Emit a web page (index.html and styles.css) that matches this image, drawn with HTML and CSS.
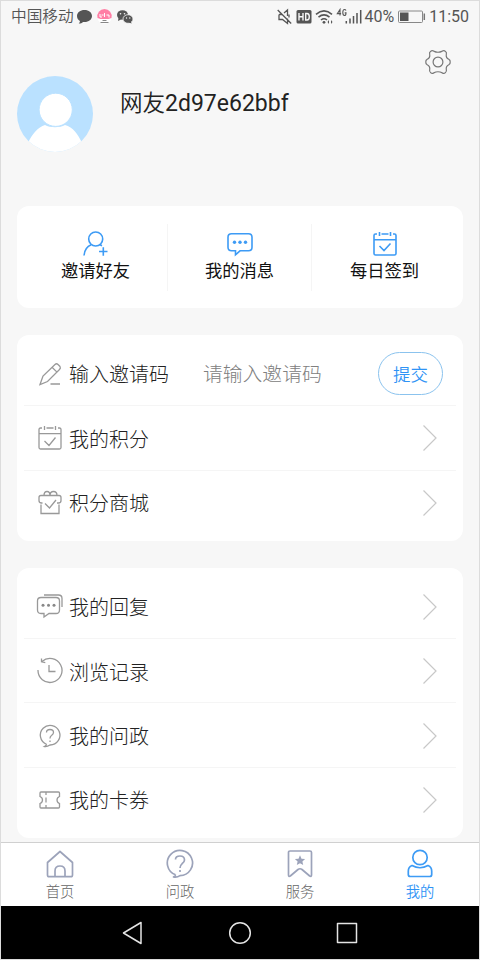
FILE: index.html
```html
<!DOCTYPE html>
<html lang="zh-CN">
<head>
<meta charset="utf-8">
<title>我的</title>
<link rel="stylesheet" href="styles.css">
</head>
<body>
<div class="app">
  <header class="status">
    <span class="carrier">中国移动</span>
    <svg class="notices" width="58" height="18" viewBox="0 0 58 18">
      <path fill="#555" d="M8.500 2c4.300 0 7.500 2.600 7.500 6s-3.200 6-7.500 6l-1.500-.1c-1 1.300-2.800 1.800-4.300 1.700.9-.8 1.300-1.700 1.200-2.600C2.100 12 1 10 1 8c0-3.400 3.200-6 7.500-6z"/>
      <circle cx="28.500" cy="9" r="7" fill="#fff"/>
      <path fill="#ff7fa5" d="M21.500 10a7.200 7.200 0 1 1 14 0l-3 1h-8z"/>
      <path fill="none" stroke="#fff" d="M24 6v3h2M28.500 5v4M30.500 7h2.500v2.500M25.500 7h2"/>
      <path stroke="#888" d="M26.500 12.500h4M24.500 14.500h8"/>
      <ellipse cx="46.500" cy="7" rx="5.500" ry="4.800" fill="#555"/>
      <path fill="#555" d="M42.500 10l-.5 3 3-1.500z"/>
      <ellipse cx="52" cy="11" rx="5" ry="4.300" fill="#555" stroke="#f7f7f7" stroke-width=".8"/>
      <path fill="#555" d="M54.500 13l1.200 2.600-3-1z"/>
      <g fill="#f7f7f7"><circle cx="44.500" cy="5.700" r=".8"/><circle cx="48.500" cy="5.700" r=".8"/><circle cx="50.500" cy="10" r=".7"/><circle cx="53.800" cy="10" r=".7"/></g>
    </svg>
    <span class="spacer"></span>
    <svg width="86" height="18" viewBox="0 0 86 18">
      <g fill="none" stroke="#555" stroke-width="1.300">
        <path d="M.7 2l13.500 13.500M2 6.500v5h3.500l5 4v-5M2 6.500h3M7 5l3.500-3v6M12 6.500v3"/>
      </g>
      <rect x="19.500" y="2" width="15" height="13.500" rx="1.500" fill="#555"/>
      <path fill="none" stroke="#f7f7f7" stroke-width="1.400" d="M22 5v7.500M26 5v7.500M22 8.700h4M28.700 5.500H30q2.300 0 2.300 3.200T30 12h-1.300z"/>
      <g fill="none" stroke="#555" stroke-width="1.600">
        <path d="M39 6.300q8-7 16 0M41.500 9.200q5.500-4.500 11 0M44 12q3-2.400 6 0"/>
      </g>
      <circle cx="47" cy="14.300" r="1.400" fill="#555"/>
      <path fill="#555" d="M50.500 14l1.500-2v4zM55.500 14L54 12v4z"/>
      <path fill="none" stroke="#555" stroke-width="1.100" d="M63 7.500V1.500L60.300 5.600h3.800M69 2.500q-.5-1-1.500-1-1.700 0-1.700 3t1.700 3q1.500 0 1.500-2.600h-1.300"/>
      <path stroke="#555" stroke-width="1.500" d="M69.300 15.500v-2.500M73 15.500v-5M76.500 15.500V8M80 15.500V5M83.700 15.500V2"/>
    </svg>
    <span class="percent">40%</span>
    <svg class="battery" width="28" height="14" viewBox="0 0 28 14">
      <rect x=".5" y="1" width="24" height="11.500" rx="1" fill="none" stroke="#888"/>
      <rect x="2" y="2.500" width="8.500" height="8.500" fill="#555"/>
      <path stroke="#777" stroke-width="1.500" d="M26.300 3.500v6.500"/>
    </svg>
    <span class="time">11:50</span>
  </header>

  <section class="profile">
    <svg class="avatar" width="78" height="78" viewBox="0 0 78 78">
      <defs><clipPath id="disc"><circle cx="39" cy="39" r="38"/></clipPath></defs>
      <g clip-path="url(#disc)">
        <rect width="78" height="78" fill="#bae1ff"/>
        <path fill="#fff" d="M12 68C16 59 22 52 29 50 34 53 44 53 49 50 57 52 62 59 66 68L60 80H18z"/>
        <circle cx="39.700" cy="34.800" r="16.600" fill="#fff" stroke="#bae1ff" stroke-width="1"/>
      </g>
    </svg>
    <h1 class="name">网友<span class="latin">2d97e62bbf</span></h1>
    <svg class="gear" width="28" height="28" viewBox="-14 -14 28 28" fill="none" stroke="#777" stroke-width="1.200">
      <circle r="4.900"/>
      <path stroke-linejoin="round" d="M-7.300-10.700Q-6-12-4.300-10.900Q0-8.600 4.300-10.900Q6-12 7.300-10.700Q9-9.500 8.300-7.500Q7.700-4.200 10.800-2.700Q12.400-1.800 12.200 0Q12.400 1.800 10.800 2.700Q7.700 4.200 8.300 7.500Q9 9.500 7.300 10.700Q6 12 4.300 10.900Q0 8.600-4.300 10.900Q-6 12-7.300 10.700Q-9 9.500-8.300 7.500Q-7.700 4.200-10.800 2.700Q-12.400 1.800-12.200 0Q-12.400-1.800-10.800-2.700Q-7.700-4.200-8.300-7.500Q-9-9.500-7.300-10.700z"/>
    </svg>
  </section>

  <main class="content">
    <nav class="card shortcuts">
      <a class="shortcut">
        <svg width="28" height="28" viewBox="0 0 28 28"><circle cx="13.700" cy="9" r="7"/><path d="M2 25.500C2.500 20 5 16.500 9.200 14.800M17.500 14.500l2.500 1.200M17 21.500h8.500M21.300 17.300v8.500"/></svg>
        <span>邀请好友</span>
      </a>
      <a class="shortcut">
        <svg width="28" height="28" viewBox="0 0 28 28"><path d="M5.500 3.800h17q3.500 0 3.500 3.500v10q0 3.500-3.500 3.500H14l-4.500 4v-4h-4Q2 20.800 2 17.300v-10q0-3.500 3.500-3.500z"/><g class="dots"><circle cx="8.500" cy="12.300" r="1.700"/><circle cx="14" cy="12.300" r="1.700"/><circle cx="19.500" cy="12.300" r="1.700"/></g></svg>
        <span>我的消息</span>
      </a>
      <a class="shortcut">
        <svg width="28" height="28" viewBox="0 0 28 28"><path d="M6 4H4.500Q3 4 3 5.500v18Q3 25 4.500 25h19q1.500 0 1.500-1.500v-18Q25 4 23.500 4H22M10.500 4h7M8.500 2v4M19.500 2v4M3 9.700h22M8.500 16l4.500 4.500 6.500-7"/></svg>
        <span>每日签到</span>
      </a>
    </nav>

    <section class="card list">
      <div class="row">
        <svg class="icon" width="28" height="28" viewBox="0 0 28 28"><path d="M4 24.500L7 16 19 4.500Q20.500 3 22 4.500L24 6.500Q25 8 23.500 9.500L11.500 21.500zM16 7.300l5 4.800M14.500 24h9.500"/></svg>
        <span class="label">输入邀请码</span>
        <input class="code" placeholder="请输入邀请码">
        <button class="submit">提交</button>
      </div>
      <div class="row">
        <svg class="icon" width="28" height="28" viewBox="0 0 28 28"><path d="M6 4H4.500Q3 4 3 5.500v18Q3 25 4.500 25h19q1.500 0 1.500-1.500v-18Q25 4 23.500 4H22M10.500 4h7M8.500 2v4M19.500 2v4M3 9.700h22M8.500 17l4.500 4.500 6.500-8"/></svg>
        <span class="label">我的积分</span>
        <svg class="chevron" width="16" height="28" viewBox="0 0 16 28"><path d="M1.500 1.500L14 14 1.500 26.500"/></svg>
      </div>
      <div class="row">
        <svg class="icon" width="28" height="28" viewBox="0 0 28 28"><path d="M6.500 14H5.500Q3 14 3 11.500V8.500Q3 6.500 5 6.500h18q2 0 2 2v3q0 2.500-2.500 2.500h-1.500M8 6.500Q8 2.500 11 2.500T14 6.500M14 6.500Q14 2.500 17.500 2.500T21 6.500M5 15.500V24.500h18V15.500M9 14.500l4.500 4.500 6.500-8"/></svg>
        <span class="label">积分商城</span>
        <svg class="chevron" width="16" height="28" viewBox="0 0 16 28"><path d="M1.500 1.500L14 14 1.500 26.500"/></svg>
      </div>
    </section>

    <section class="card list">
      <div class="row">
        <svg class="icon" width="28" height="28" viewBox="0 0 28 28"><path d="M5 4.500h15q3.500 0 3.500 3.500v9q0 3.500-3.500 3.500h-7L8 24v-3.500H5Q1.500 20.500 1.500 17V8Q1.500 4.500 5 4.500zM8 2h14.500q3.500 0 3.500 3.500V14"/><g class="dots"><circle cx="7" cy="12.300" r="1.500"/><circle cx="12.500" cy="12.300" r="1.500"/><circle cx="18" cy="12.300" r="1.500"/></g></svg>
        <span class="label">我的回复</span>
        <svg class="chevron" width="16" height="28" viewBox="0 0 16 28"><path d="M1.500 1.500L14 14 1.500 26.500"/></svg>
      </div>
      <div class="row">
        <svg class="icon" width="28" height="28" viewBox="0 0 28 28"><path d="M6 4.500A12 12 0 1 1 2 13M5.500 1.500v3.300l3.800.8M13 8v6.500h6.500"/></svg>
        <span class="label">浏览记录</span>
        <svg class="chevron" width="16" height="28" viewBox="0 0 16 28"><path d="M1.500 1.500L14 14 1.500 26.500"/></svg>
      </div>
      <div class="row">
        <svg class="icon" width="28" height="28" viewBox="0 0 28 28"><path d="M10.500 22.300A9.800 9.800 0 1 1 14 23Q11 25 8.500 24.500 10.500 23.500 10.500 22.300M10.500 10.500Q10.500 7.500 14 7.500t3.500 3Q17.500 12 15.500 13.500 14 14.500 14 16.500M14 18.500V20"/></svg>
        <span class="label">我的问政</span>
        <svg class="chevron" width="16" height="28" viewBox="0 0 16 28"><path d="M1.500 1.500L14 14 1.500 26.500"/></svg>
      </div>
      <div class="row">
        <svg class="icon" width="28" height="28" viewBox="0 0 28 28"><path d="M5 6h17.500q1 0 1 1v3.500q-2.500 1-2.500 3.500t2.500 3.500V21q0 1-1 1H5Q4 22 4 21v-3.500q2.500-1 2.500-3.500T4 10.500V7Q4 6 5 6zM10 6v3M10 11.500v5M10 19v3"/></svg>
        <span class="label">我的卡券</span>
        <svg class="chevron" width="16" height="28" viewBox="0 0 16 28"><path d="M1.500 1.500L14 14 1.500 26.500"/></svg>
      </div>
    </section>
  </main>

  <nav class="tabs">
    <a class="tab">
      <svg width="30" height="30" viewBox="0 0 30 30"><path d="M2.500 13.500L15 2.500l12.500 11V26q0 1.700-1.700 1.700H4.200Q2.500 27.700 2.500 26zM10 27.500V22q0-5 5-5t5 5v5.500"/></svg>
      <span>首页</span>
    </a>
    <a class="tab">
      <svg width="30" height="30" viewBox="0 0 30 30"><path d="M10.500 25.800A12.600 12.600 0 1 1 15 26.600Q12 28.800 8.500 28 10.500 27 10.500 25.800M10.500 10.500Q10.500 7 15 7t4.500 4Q19.500 13 17 14.800 15 16.500 15 19M15 21v2"/></svg>
      <span>问政</span>
    </a>
    <a class="tab">
      <svg width="30" height="30" viewBox="0 0 30 30"><path d="M5 2h20q1.500 0 1.500 1.500v22.500q0 2-1.800 1L17 20.500q-2-1.500-4 0L5.300 27q-1.800 1-1.800-1V3.500Q3.500 2 5 2z"/><path class="solid" d="M15 6.300l1.500 3.400 3.600.4-2.700 2.400.8 3.600-3.200-1.900-3.200 1.900.8-3.600-2.700-2.400 3.600-.4z"/></svg>
      <span>服务</span>
    </a>
    <a class="tab active">
      <svg width="30" height="30" viewBox="0 0 30 30"><circle cx="15" cy="8.500" r="7.200"/><path d="M7 16.500Q15 21 23 16.500 26.700 18 26.700 22v3.500q0 2-2 2H5.300q-2 0-2-2V22Q3.300 18 7 16.500z"/></svg>
      <span>我的</span>
    </a>
  </nav>

  <footer class="system">
    <svg width="22" height="24" viewBox="0 0 22 24"><path d="M1.500 12L19 1.500v21z"/></svg>
    <svg width="24" height="24" viewBox="0 0 24 24"><circle cx="12" cy="12" r="10.300"/></svg>
    <svg width="22" height="24" viewBox="0 0 22 24"><rect x="1.500" y="2.500" width="19" height="19"/></svg>
  </footer>
</div>
</body>
</html>
```

FILE: styles.css
```css
* { box-sizing: border-box; }

body {
  margin: 0;
  font-family: Roboto, "Noto Sans CJK SC", sans-serif;
  font-weight: 300;
}

svg { display: block; flex: none; }

.app {
  display: flex;
  flex-direction: column;
  width: 480px;
  height: 960px;
  overflow: hidden;
  border: 1px solid #dcdcdc;
  background: #f7f7f7;
}

.status {
  display: flex;
  align-items: center;
  height: 32px;
  padding: 0 10px;
  color: #555;
  font-size: 16px;
  font-weight: 400;
  line-height: 32px;
  white-space: nowrap;
}
.carrier { font-size: 15.700px; font-weight: 350; }
.notices { margin-left: 2px; }
.spacer { flex: 1; }
.percent { margin-left: 1px; }
.battery { margin: 0 3px 0 4px; }
.time { font-size: 16px; }

.profile {
  display: flex;
  align-items: flex-start;
  height: 173px;
  padding: 15px 27px 0 15px;
}
.avatar { margin-top: 27px; }
.name {
  flex: 1;
  margin: 39px 0 0 26px;
  color: #222;
  font-size: 22.500px;
  font-weight: 350;
  line-height: 32px;
}
.latin { font-size: 23px; font-weight: 400; }

.content {
  display: flex;
  flex-direction: column;
  flex: none;
  gap: 27px;
  height: 636px;
  padding: 0 16px;
}
.card {
  flex: none;
  border-radius: 12px;
  background: #fff;
}

.shortcuts {
  display: grid;
  grid-template-columns: 150px 144px 1fr;
  height: 102px;
  padding: 18px 0 17px;
}
.shortcut {
  display: flex;
  flex-direction: column;
  align-items: center;
  gap: 1px;
  padding-top: 6px;
  color: #111;
  font-size: 17.300px;
  font-weight: 400;
  line-height: 24px;
}
.shortcut:first-child { padding-left: 7px; }
.shortcut:last-child { padding-right: 6px; }
.shortcut + .shortcut { border-left: 1px solid #f5f5f5; }
.shortcut svg { fill: none; stroke: #3d9bf5; stroke-width: 1.600; }
.shortcut .dots { fill: #3d9bf5; stroke: none; }

.list { padding: 6px 7px 7px; }
.row {
  display: flex;
  align-items: center;
  height: 64.300px;
  padding: 1px 18px 0 12px;
}
.row + .row { border-top: 1px solid #f5f5f5; }
.icon { fill: none; stroke: #999; stroke-width: 1.300; }
.icon .dots { fill: #888; stroke: none; }
.label {
  margin: 3px 0 0 5px;
  color: #222;
  font-size: 20px;
  line-height: 30px;
}
.chevron {
  margin-left: auto;
  fill: none;
  stroke: #c8c8c8;
  stroke-width: 1.200;
}
.code {
  flex: 1;
  min-width: 0;
  margin: 1px 0 0 34px;
  padding: 0;
  border: 0;
  outline: 0;
  background: none;
  font: inherit;
  font-size: 19.800px;
}
.code::placeholder { color: #808080; }
.submit {
  flex: none;
  width: 65px;
  height: 43px;
  margin-right: -5px;
  padding: 0;
  border: 1px solid #8bc3ee;
  border-radius: 22px;
  background: #fff;
  color: #2f93f5;
  font: inherit;
  font-size: 17.500px;
  font-weight: 350;
}

.tabs {
  display: grid;
  grid-template-columns: repeat(4, 120px);
  justify-content: center;
  flex: none;
  height: 64px;
  border-top: 1px solid #d0d0d0;
  background: #fff;
}
.tab {
  display: flex;
  flex-direction: column;
  align-items: center;
  gap: 1px;
  padding-top: 6px;
  color: #666;
  font-size: 14.300px;
  line-height: 24px;
}
.tab svg { fill: none; stroke: #9ca3ba; stroke-width: 1.700; stroke-linejoin: round; }
.tab .solid { fill: #9ca3ba; stroke: none; }
.tab.active { color: #2f93f5; font-weight: 350; }
.tab.active svg { stroke: #3d9bf5; }

.system {
  display: flex;
  align-items: center;
  justify-content: center;
  flex: 1;
  gap: 84px;
  background: #000;
}
.system svg { fill: none; stroke: #e4e4e4; stroke-width: 1.500; stroke-linejoin: round; }
```
